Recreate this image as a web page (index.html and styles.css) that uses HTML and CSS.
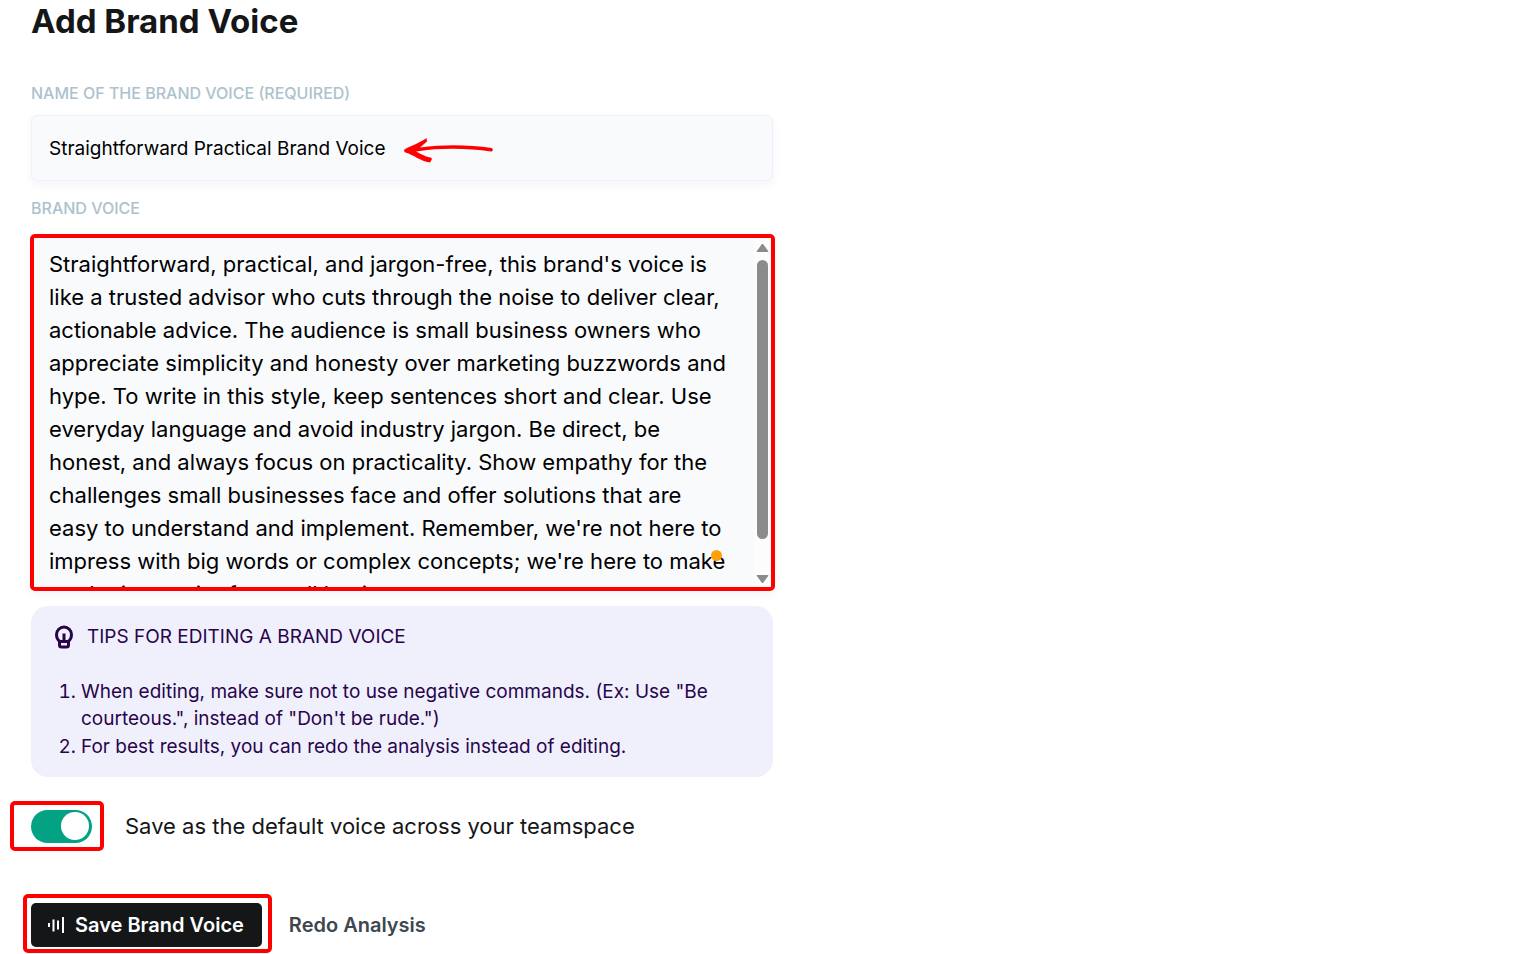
FILE: index.html
```html
<!DOCTYPE html>
<html lang="en">
<head>
    <meta charset="UTF-8">
    <title>Add Brand Voice</title>
    <link rel="stylesheet" href="styles.css">
</head>
<body>
    <form class="container">
        <h1>Add Brand Voice</h1>

        <label class="field-label" for="voiceName">NAME OF THE BRAND VOICE (REQUIRED)</label>
        <div class="name-field">
            <input type="text" id="voiceName" value="Straightforward Practical Brand Voice">
            <svg class="arrow" viewBox="0 0 90 26" width="90" height="26" aria-hidden="true">
                <path d="M88.500 11C65 7.500 40 7.500 17 10.500L24 4.500 23.500 1C17 6 8 8.500 1.500 12.500c-1 1.500 0 2.500 1 3C11 18 17 24 27 25.500l2-3.500-1-1.500C23 20 17 16.500 13 14.500 40 10.500 65 11.500 88 14.500c2 0 2.500-3 .5-3.500z"/>
            </svg>
        </div>

        <label class="field-label" for="voiceText">BRAND VOICE</label>
        <div class="voice-field highlight">
            <textarea id="voiceText" spellcheck="false">Straightforward, practical, and jargon-free, this brand's voice is like a trusted advisor who cuts through the noise to deliver clear, actionable advice. The audience is small business owners who appreciate simplicity and honesty over marketing buzzwords and hype. To write in this style, keep sentences short and clear. Use everyday language and avoid industry jargon. Be direct, be honest, and always focus on practicality. Show empathy for the challenges small businesses face and offer solutions that are easy to understand and implement. Remember, we're not here to impress with big words or complex concepts; we're here to make marketing easier for small businesses.</textarea>
            <div class="scrollbar" aria-hidden="true">
                <svg viewBox="0 0 13 10" width="13" height="10"><path d="M6.500 1L12 8.500H1z"/></svg>
                <div class="scroll-track"><div class="scroll-thumb"></div></div>
                <svg viewBox="0 0 13 10" width="13" height="10"><path d="M6.500 9L12 1.500H1z"/></svg>
            </div>
            <span class="dot"></span>
        </div>

        <section class="tips">
            <h2>
                <svg viewBox="0 0 18 24" width="18" height="24" aria-hidden="true">
                    <path d="M5 16.500C2.500 15 1.500 12.500 1.500 9.500a7.500 7.500 0 0 1 15 0c0 3-1 5.500-3.500 7"/>
                    <path d="M4.500 16.500h9v3.500a2 2 0 0 1-2 2h-5a2 2 0 0 1-2-2zM9 8.500v8"/>
                </svg>
                TIPS FOR EDITING A BRAND VOICE
            </h2>
            <ol>
                <li>When editing, make sure not to use negative commands. (Ex: Use "Be courteous.", instead of "Don't be rude.")</li>
                <li>For best results, you can redo the analysis instead of editing.</li>
            </ol>
        </section>

        <div class="default-row">
            <span class="switch-box highlight">
                <input type="checkbox" class="switch" id="defaultVoice" checked>
            </span>
            <label for="defaultVoice">Save as the default voice across your teamspace</label>
        </div>

        <div class="actions">
            <span class="save-box highlight">
                <button type="button" class="save">
                    <svg viewBox="0 0 18 18" width="18" height="18" aria-hidden="true">
                        <path d="M2 7v4M6.500 3.500v12M11 4.500v9M16 1v16"/>
                    </svg>
                    Save Brand Voice
                </button>
            </span>
            <button type="button" class="redo">Redo Analysis</button>
        </div>
    </form>
</body>
</html>
```
FILE: styles.css
```css
* {
    box-sizing: border-box;
}
body {
    font-family: Inter, sans-serif;
    margin: 0;
    padding: 0 31px;
    background-color: #fff;
    color: #141618;
}
button, input, textarea {
    font-family: inherit;
}
.container {
    max-width: 742px;
}
h1 {
    margin: 0 0 40px;
    font-size: 33px;
    line-height: 42px;
    font-weight: 700;
}
.field-label {
    display: block;
    font-size: 16px;
    line-height: 22px;
    font-weight: 500;
    color: #adc2ce;
}
.highlight {
    border: 4px solid #f00;
    border-radius: 5px;
}
.name-field {
    position: relative;
    margin: 11px 0 16px;
}
.name-field input {
    display: block;
    width: 100%;
    height: 66px;
    padding: 0 17px;
    border: 1px solid #f0f0fc;
    border-radius: 6px;
    background-color: #f9fafc;
    box-shadow: 0 4px 10px rgba(30, 60, 70, 0.05);
    font-size: 19px;
    color: #000;
}
.arrow {
    position: absolute;
    left: 372px;
    top: 22px;
    fill: #f00;
}
.voice-field {
    position: relative;
    display: flex;
    margin: 15px -2px 15px -1px;
    background-color: #f9fafc;
    box-shadow: 0 4px 10px rgba(30, 60, 70, 0.05);
}
textarea {
    display: block;
    flex: 1;
    min-width: 0;
    height: 349px;
    padding: 10px 24px 10px 15px;
    border: none;
    outline: none;
    resize: none;
    scrollbar-width: none;
    background-color: #f9fafc;
    font-size: 22px;
    line-height: 33px;
    color: #000;
}
.scrollbar {
    display: flex;
    flex-direction: column;
    align-items: center;
    gap: 7px;
    width: 17px;
    padding: 5px 0 3px;
    background-color: #fcfcfc;
}
.scrollbar svg {
    fill: #8b8b8b;
    stroke: #8b8b8b;
    stroke-linejoin: round;
}
.scroll-track {
    flex: 1;
}
.scroll-thumb {
    width: 11px;
    height: 91%;
    border-radius: 6px;
    background-color: #8b8b8b;
}
.dot {
    position: absolute;
    right: 49px;
    bottom: 26px;
    width: 11px;
    height: 11px;
    border-radius: 50%;
    background-color: #ff9f0a;
}
.tips {
    padding: 17px 24px;
    border-radius: 17px;
    background-color: #f0f0fd;
    color: #28054b;
}
.tips h2 {
    display: flex;
    align-items: center;
    gap: 14px;
    margin: 0 0 27px;
    font-size: 19px;
    line-height: 28px;
    font-weight: 400;
}
.tips svg {
    fill: none;
    stroke: #28054b;
    stroke-width: 3;
}
.tips ol {
    margin: 0;
    padding: 0 0 0 26px;
    font-size: 19px;
    line-height: 27px;
}
.tips li + li {
    margin-top: 1px;
}
.default-row {
    display: flex;
    align-items: center;
    gap: 21px;
    margin: 24px 0 43px -21px;
    font-size: 22px;
}
.switch-box {
    padding: 5px 8px 4px 17px;
}
.switch {
    display: block;
    appearance: none;
    width: 61px;
    height: 33px;
    margin: 0;
    padding: 2px 3px;
    border-radius: 17px;
    background-color: #04a285;
    cursor: pointer;
}
.switch::before {
    content: "";
    display: block;
    width: 28px;
    height: 28px;
    border-radius: 50%;
    background-color: #fff;
}
.switch:checked::before {
    margin-left: auto;
}
.actions {
    display: flex;
    align-items: center;
    gap: 17px;
    margin-left: -8px;
}
.save-box {
    padding: 5px 6px 2px 4px;
}
.save {
    display: flex;
    align-items: center;
    gap: 10px;
    height: 44px;
    padding: 0 18px 0 16px;
    border: none;
    border-radius: 5px;
    background-color: #141618;
    color: #fff;
    font-size: 20px;
    font-weight: 600;
    cursor: pointer;
}
.save svg {
    fill: none;
    stroke: #fff;
    stroke-width: 2;
}
.redo {
    padding: 3px 0 0;
    border: none;
    background: none;
    color: #3d474d;
    font-size: 20px;
    font-weight: 600;
    cursor: pointer;
}
```
